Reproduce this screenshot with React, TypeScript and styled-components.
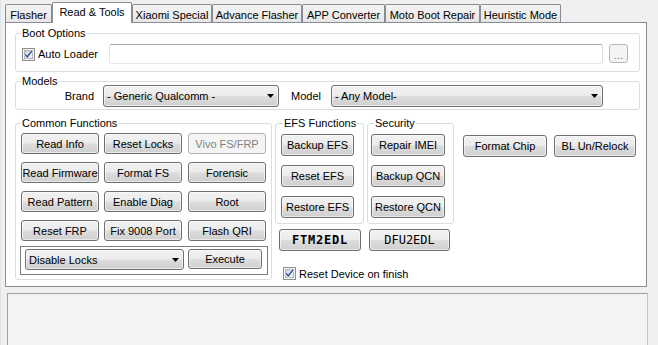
import React from "react";
import styled, { createGlobalStyle } from "styled-components";

const GlobalStyle = createGlobalStyle`
  html, body { margin: 0; padding: 0; background: #f0f0f0; }
  body { font-family: "Liberation Sans", Arial, sans-serif; font-size: 11px; color: #000; }
  * { box-sizing: border-box; }
`;

const Window = styled.div`
  width: 658px;
  height: 345px;
  overflow: hidden;
  padding: 2px 0 0 4px;
  border-left: 1px solid #dde5ec;
  display: flex;
  flex-direction: column;
`;

const TabStrip = styled.div`
  display: flex;
  align-items: flex-end;
  height: 20px;
`;

const Tab = styled.div<{ $w: number; $active?: boolean }>`
  width: ${(p) => p.$w}px;
  height: ${(p) => (p.$active ? 21 : 18)}px;
  margin-bottom: ${(p) => (p.$active ? -1 : 0)}px;
  position: relative;
  z-index: ${(p) => (p.$active ? 1 : 0)};
  border: 1px solid #898c95;
  border-bottom: none;
  border-radius: 2px 2px 0 0;
  background: ${(p) => (p.$active ? "#ffffff" : "linear-gradient(#f4f4f4, #e6e6e6)")};
  text-align: center;
  line-height: 13px;
  padding-top: ${(p) => (p.$active ? 3 : 4)}px;
  white-space: nowrap;
`;

const TabPanel = styled.div`
  width: 642px;
  height: 265px;
  flex-shrink: 0;
  border: 1px solid #898c95;
  background: #fff;
  padding: 10px 0 0 9px;
  display: flex;
  flex-direction: column;
`;

const GroupBox = styled.div<{ $w: number; $h: number; $mt?: number; $ml?: number }>`
  width: ${(p) => p.$w}px;
  height: ${(p) => p.$h}px;
  margin-top: ${(p) => p.$mt ?? 0}px;
  margin-left: ${(p) => p.$ml ?? 0}px;
  flex-shrink: 0;
  border: 1px solid #d5dfe5;
  border-radius: 3px;
  display: flex;
  flex-direction: column;
`;

const GroupTitle = styled.div<{ $ml?: number }>`
  align-self: flex-start;
  margin: -7px 0 0 ${(p) => p.$ml ?? 5}px;
  padding: 0 1px;
  background: #fff;
  line-height: 13px;
  white-space: nowrap;
`;

const Row = styled.div<{ $mt?: number; $ml?: number; $align?: string }>`
  display: flex;
  align-items: ${(p) => p.$align ?? "flex-start"};
  margin-top: ${(p) => p.$mt ?? 0}px;
  margin-left: ${(p) => p.$ml ?? 0}px;
`;

const Column = styled.div<{ $mt?: number; $ml?: number; $gap?: number }>`
  display: flex;
  flex-direction: column;
  gap: ${(p) => p.$gap ?? 0}px;
  margin-top: ${(p) => p.$mt ?? 0}px;
  margin-left: ${(p) => p.$ml ?? 0}px;
`;

const Button = styled.button<{
  $w: number;
  $h: number;
  $ml?: number;
  $disabled?: boolean;
  $mono?: boolean;
  $bold?: boolean;
}>`
  width: ${(p) => p.$w}px;
  height: ${(p) => p.$h}px;
  margin: 0 0 0 ${(p) => p.$ml ?? 0}px;
  flex-shrink: 0;
  padding: 0;
  border: 1px solid ${(p) => (p.$disabled ? "#adb2b5" : "#707070")};
  border-radius: 3px;
  background: ${(p) =>
    p.$disabled
      ? "#f4f4f4"
      : "linear-gradient(#f2f2f2 0%, #ebebeb 48%, #dddddd 52%, #cfcfcf 100%)"};
  box-shadow: ${(p) => (p.$disabled ? "none" : "inset 0 0 0 1px rgba(255,255,255,0.55)")};
  color: ${(p) => (p.$disabled ? "#838383" : "#000")};
  font-family: ${(p) =>
    p.$mono ? '"DejaVu Sans Mono", "Liberation Mono", monospace' : '"Liberation Sans", Arial, sans-serif'};
  font-size: ${(p) => (p.$mono ? 12 : 11)}px;
  font-weight: ${(p) => (p.$bold ? 700 : 400)};
  letter-spacing: ${(p) => (p.$bold ? 0.8 : 0)}px;
  white-space: nowrap;
  cursor: default;
`;

const Browse = styled.button`
  width: 19px;
  height: 19px;
  margin-left: 6px;
  padding: 0 0 2px;
  border: 1px solid #b4b7ba;
  border-radius: 3px;
  background: #f4f4f4;
  color: #7a7a7a;
  font-family: "Liberation Sans", Arial, sans-serif;
  font-size: 11px;
  display: flex;
  align-items: flex-end;
  justify-content: center;
  line-height: 10px;
`;

const Combo = styled.div<{ $w: number; $h: number }>`
  width: ${(p) => p.$w}px;
  height: ${(p) => p.$h}px;
  flex-shrink: 0;
  border: 1px solid #707070;
  border-radius: 3px;
  background: linear-gradient(#f2f2f2 0%, #ebebeb 48%, #dddddd 52%, #cfcfcf 100%);
  box-shadow: inset 0 0 0 1px rgba(255, 255, 255, 0.55);
  display: flex;
  align-items: center;
  justify-content: space-between;
  padding: 0 4px 0 3px;
  white-space: nowrap;
`;

const TextInput = styled.div`
  width: 494px;
  height: 20px;
  border: 1px solid #abadb3;
  border-left-color: #e2e3ea;
  border-right-color: #dbdfe6;
  border-bottom-color: #e3e9ef;
  border-radius: 2px;
  background: #fff;
`;

const CheckLabel = styled.label<{ $w?: number; $h?: number }>`
  display: flex;
  align-items: center;
  gap: 3px;
  width: ${(p) => (p.$w ? `${p.$w}px` : "auto")};
  height: ${(p) => p.$h ?? 13}px;
  flex-shrink: 0;
  white-space: nowrap;
`;

const FieldLabel = styled.div<{ $w: number; $pr: number }>`
  width: ${(p) => p.$w}px;
  padding-right: ${(p) => p.$pr}px;
  text-align: right;
  flex-shrink: 0;
`;

const ButtonGrid = styled.div`
  display: grid;
  grid-template-columns: 78px 79px 78px;
  grid-auto-rows: 21px;
  column-gap: 5px;
  row-gap: 8px;
  margin: 3px 0 0 5px;
`;

const InnerPanel = styled.div`
  width: 248px;
  height: 29px;
  margin: 5px 0 0 4px;
  border: 1px solid #7d7d7d;
  padding: 2px 0 0 4px;
  display: flex;
  align-items: flex-start;
  gap: 4px;
`;

const LogPanel = styled.div`
  width: 641px;
  height: 60px;
  flex-shrink: 0;
  margin: 6px 0 0 2px;
  border: 1px solid #a0a0a0;
  border-right-color: #c4c4c4;
  background: #f3f3f3;
`;

const Arrow = () => (
  <svg width="7" height="4" viewBox="0 0 7 4">
    <polygon points="0,0 7,0 3.5,4" fill="#000" />
  </svg>
);

const CheckBox = () => (
  <svg width="13" height="13" viewBox="0 0 13 13">
    <defs>
      <linearGradient id="cbg" x1="0" y1="0" x2="1" y2="1">
        <stop offset="0" stopColor="#cbd0d6" />
        <stop offset="1" stopColor="#f6f7f8" />
      </linearGradient>
    </defs>
    <rect x="0.5" y="0.5" width="12" height="12" fill="#f4f4f4" stroke="#8e8f8f" />
    <rect x="2.5" y="2.5" width="8" height="8" fill="url(#cbg)" stroke="#aeb3b9" />
    <path d="M3 6.2 L5.3 8.8 L10 2.8" fill="none" stroke="#ffffff" strokeWidth="3" />
    <path d="M3 6.2 L5.3 8.8 L10 2.8" fill="none" stroke="#3f5da6" strokeWidth="1.7" />
  </svg>
);

const tabs: [string, number][] = [
  ["Flasher", 47],
  ["Read & Tools", 80],
  ["Xiaomi Special", 80],
  ["Advance Flasher", 90],
  ["APP Converter", 83],
  ["Moto Boot Repair", 95],
  ["Heuristic Mode", 81],
];

const common: { label: string; disabled?: boolean }[] = [
  { label: "Read Info" },
  { label: "Reset Locks" },
  { label: "Vivo FS/FRP", disabled: true },
  { label: "Read Firmware" },
  { label: "Format FS" },
  { label: "Forensic" },
  { label: "Read Pattern" },
  { label: "Enable Diag" },
  { label: "Root" },
  { label: "Reset FRP" },
  { label: "Fix 9008 Port" },
  { label: "Flash QRI" },
];

export default function App() {
  return (
    <>
      <GlobalStyle />
      <Window>
        <TabStrip>
          {tabs.map(([t, w]) => (
            <Tab key={t} $w={w} $active={t === "Read & Tools"}>
              {t}
            </Tab>
          ))}
        </TabStrip>
        <TabPanel>
          <GroupBox $w={625} $h={39}>
            <GroupTitle>Boot Options</GroupTitle>
            <Row $mt={4} $ml={6}>
              <CheckLabel $w={87} $h={20}>
                <CheckBox />
                Auto Loader
              </CheckLabel>
              <TextInput />
              <Browse>...</Browse>
            </Row>
          </GroupBox>

          <GroupBox $w={625} $h={29} $mt={9}>
            <GroupTitle>Models</GroupTitle>
            <Row $mt={-3} $align="center">
              <FieldLabel $w={87} $pr={9}>Brand</FieldLabel>
              <Combo $w={176} $h={22}>
                <span>- Generic Qualcomm -</span>
                <Arrow />
              </Combo>
              <FieldLabel $w={52} $pr={10}>Model</FieldLabel>
              <Combo $w={272} $h={22}>
                <span>- Any Model-</span>
                <Arrow />
              </Combo>
            </Row>
          </GroupBox>

          <Row $mt={13}>
            <GroupBox $w={257} $h={157}>
              <GroupTitle>Common Functions</GroupTitle>
              <ButtonGrid>
                {common.map((b) => (
                  <Button key={b.label} $w={78} $h={21} $disabled={b.disabled}>
                    {b.label}
                  </Button>
                ))}
              </ButtonGrid>
              <InnerPanel>
                <Combo $w={159} $h={21}>
                  <span>Disable Locks</span>
                  <Arrow />
                </Combo>
                <Button $w={74} $h={20}>Execute</Button>
              </InnerPanel>
            </GroupBox>

            <Column $ml={3}>
              <Row>
                <GroupBox $w={89} $h={101}>
                  <GroupTitle $ml={7}>EFS Functions</GroupTitle>
                  <Column $mt={4} $ml={5} $gap={9}>
                    <Button $w={73} $h={22}>Backup EFS</Button>
                    <Button $w={73} $h={22}>Reset EFS</Button>
                    <Button $w={73} $h={22}>Restore EFS</Button>
                  </Column>
                </GroupBox>
                <GroupBox $w={87} $h={101} $ml={3}>
                  <GroupTitle $ml={6}>Security</GroupTitle>
                  <Column $mt={4} $ml={3} $gap={9}>
                    <Button $w={74} $h={22}>Repair IMEI</Button>
                    <Button $w={74} $h={22}>Backup QCN</Button>
                    <Button $w={74} $h={22}>Restore QCN</Button>
                  </Column>
                </GroupBox>
              </Row>
              <Row $mt={5} $ml={4}>
                <Button $w={82} $h={22} $mono $bold>FTM2EDL</Button>
                <Button $w={81} $h={22} $ml={8} $mono>DFU2EDL</Button>
              </Row>
              <Row $mt={16} $ml={8}>
                <CheckLabel>
                  <CheckBox />
                  Reset Device on finish
                </CheckLabel>
              </Row>
            </Column>

            <Row $mt={12} $ml={9}>
              <Button $w={84} $h={22}>Format Chip</Button>
              <Button $w={82} $h={22} $ml={7}>BL Un/Relock</Button>
            </Row>
          </Row>
        </TabPanel>
        <LogPanel />
      </Window>
    </>
  );
}
